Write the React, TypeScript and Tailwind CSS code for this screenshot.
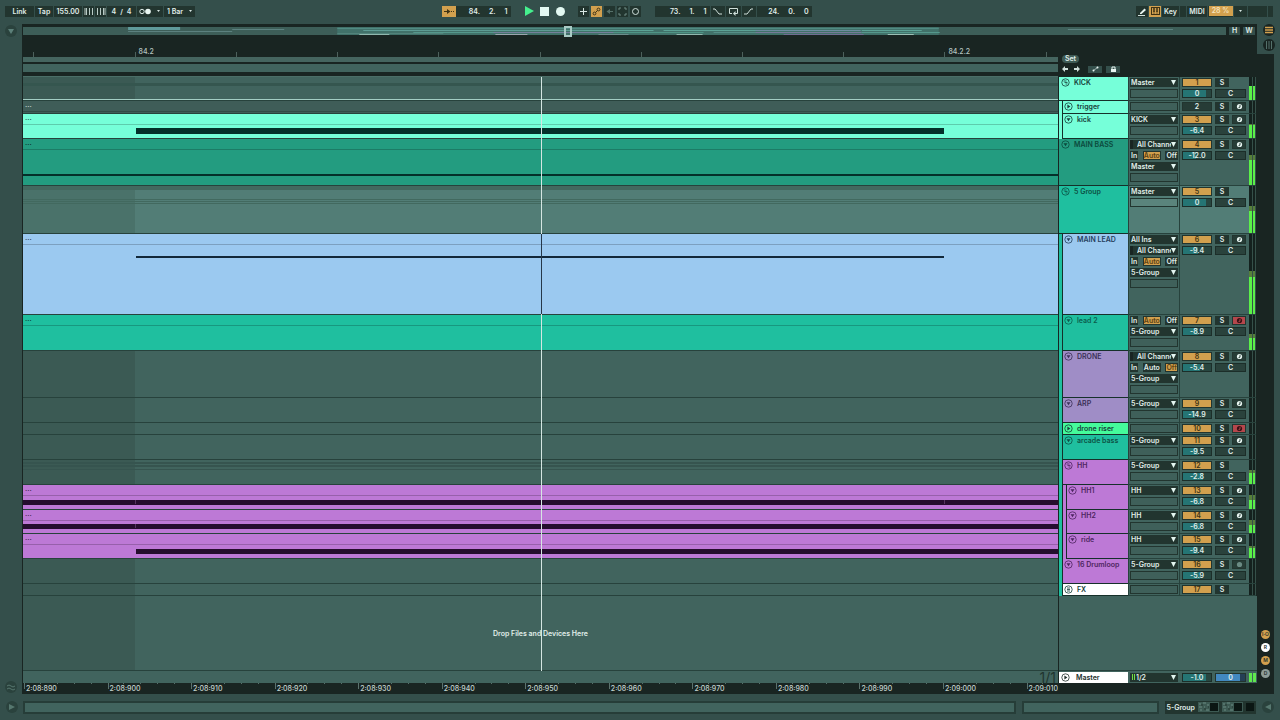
import { useState } from "react";
import type { ReactNode } from "react";

type Note = { className: string };

type Track = {
  id: number;
  name: string;
  level: 0 | 1 | 2;
  icon: "group" | "down" | "right" | "return";
  height: string;
  color: string;
  text?: string;
  lane?: string;
  clip?: boolean;
  notes?: Note[];
  input?: string;
  channel?: boolean;
  monitor?: "In" | "Auto" | "Off";
  output?: string;
  active?: boolean;
  volume?: string;
  fill?: number;
  arm?: "off" | "armed" | "dim";
  meter: [number, number];
};

const bar = "left-0 right-0";

const tracks: Track[] = [
  {
    id: 1, name: "KICK", level: 0, icon: "group", height: "h-[24px]", color: "bg-[#76ffd9]",
    notes: [{ className: `${bar} top-[6px] h-[3px] bg-[#35564f]` }, { className: `${bar} bottom-0 h-px bg-[#a3cec4]` }],
    output: "Master", volume: "0", fill: 82, meter: [60, 0],
  },
  {
    id: 2, name: "trigger", level: 1, icon: "right", height: "h-[13px]", color: "bg-[#76ffd9]", clip: true, lane: "bg-[#3f5d58]",
    active: false, arm: "off", meter: [0, 0],
  },
  {
    id: 3, name: "kick", level: 1, icon: "down", height: "h-[25px]", color: "bg-[#76ffd9]", clip: true, lane: "bg-[#76ffd9]",
    notes: [{ className: "left-[10.9%] w-[78.1%] top-[14px] h-[6px] bg-[#04302a]" }],
    output: "KICK", volume: "-6.4", fill: 62, arm: "off", meter: [55, 4],
  },
  {
    id: 4, name: "MAIN BASS", level: 0, icon: "down", height: "h-[47px]", color: "bg-[#239c80]", clip: true, lane: "bg-[#239c80]",
    text: "text-[#0b4a3d]",
    notes: [{ className: `${bar} top-[35px] h-[2px] bg-[#04302a]` }],
    channel: true, monitor: "Auto", output: "Master", volume: "-12.0", fill: 46, arm: "off", meter: [55, 10],
  },
  {
    id: 5, name: "5 Group", level: 0, icon: "group", height: "h-[48px]", color: "bg-[#1fbf9f]", lane: "bg-[#527d76]",
    text: "text-[#0c5144]",
    notes: [
      { className: `${bar} top-0 h-[4px] bg-[#43685f]` },
      { className: `${bar} top-[13px] h-px bg-[#42695f]` },
      { className: `${bar} top-[15px] h-px bg-[#42695f]` },
      { className: `${bar} top-[17px] h-px bg-[#42695f]` },
    ],
    output: "Master", volume: "0", fill: 82, meter: [46, 12],
  },
  {
    id: 6, name: "MAIN LEAD", level: 1, icon: "down", height: "h-[81px]", color: "bg-[#9bc9f0]", clip: true, lane: "bg-[#9bc9f0]",
    text: "text-[#25405c]",
    notes: [{ className: "left-[10.9%] w-[78.1%] top-[22px] h-[2px] bg-[#12283a]" }],
    input: "All Ins", channel: true, monitor: "Auto", output: "5-Group", volume: "-9.4", fill: 55, arm: "off", meter: [46, 8],
  },
  {
    id: 7, name: "lead 2", level: 1, icon: "down", height: "h-[36px]", color: "bg-[#1fbf9f]", clip: true, lane: "bg-[#1fbf9f]",
    text: "text-[#0c5e4e]",
    monitor: "Auto", output: "5-Group", volume: "-8.9", fill: 55, arm: "armed", meter: [34, 12],
  },
  {
    id: 8, name: "DRONE", level: 1, icon: "down", height: "h-[47px]", color: "bg-[#9f8dc6]", text: "text-[#3b3058]",
    channel: true, monitor: "Off", output: "5-Group", volume: "-5.4", fill: 62, arm: "off", meter: [0, 0],
  },
  {
    id: 9, name: "ARP", level: 1, icon: "down", height: "h-[25px]", color: "bg-[#9f8dc6]", text: "text-[#3b3058]",
    output: "5-Group", volume: "-14.9", fill: 42, arm: "off", meter: [0, 0],
  },
  {
    id: 10, name: "drone riser", level: 1, icon: "right", height: "h-[12px]", color: "bg-[#45fb9b]", arm: "armed", meter: [0, 0],
  },
  {
    id: 11, name: "arcade bass", level: 1, icon: "down", height: "h-[25px]", color: "bg-[#1fbf9f]", text: "text-[#0c5144]",
    output: "5-Group", volume: "-9.5", fill: 55, arm: "off", meter: [0, 0],
  },
  {
    id: 12, name: "HH", level: 1, icon: "group", height: "h-[25px]", color: "bg-[#bd79d6]", text: "text-[#4d2560]",
    notes: [
      { className: `${bar} top-[2px] h-[2px] bg-[#36544f]` },
      { className: `${bar} top-[5px] h-[2px] bg-[#36544f]` },
      { className: `${bar} top-[9px] h-px bg-[#36544f]` },
    ],
    output: "5-Group", volume: "-2.8", fill: 72, meter: [45, 15],
  },
  {
    id: 13, name: "HH1", level: 2, icon: "down", height: "h-[25px]", color: "bg-[#bd79d6]", clip: true, lane: "bg-[#bd79d6]",
    text: "text-[#4d2560]",
    notes: [
      { className: `${bar} top-[15px] h-[5px] bg-[#250d2e]` },
      { className: "left-[10.8%] w-px top-[15px] h-[4px] bg-[#55345f]" },
      { className: "left-[89%] w-px top-[15px] h-[4px] bg-[#55345f]" },
    ],
    output: "HH", volume: "-6.8", fill: 60, arm: "off", meter: [36, 22],
  },
  {
    id: 14, name: "HH2", level: 2, icon: "down", height: "h-[24px]", color: "bg-[#bd79d6]", clip: true, lane: "bg-[#bd79d6]",
    text: "text-[#4d2560]",
    notes: [
      { className: `${bar} top-[14px] h-[5px] bg-[#250d2e]` },
      { className: "left-[10.8%] w-px top-[14px] h-[4px] bg-[#55345f]" },
    ],
    output: "HH", volume: "-6.8", fill: 60, arm: "off", meter: [36, 22],
  },
  {
    id: 15, name: "ride", level: 2, icon: "down", height: "h-[25px]", color: "bg-[#bd79d6]", clip: true, lane: "bg-[#bd79d6]",
    text: "text-[#4d2560]",
    notes: [{ className: "left-[10.9%] right-0 top-[15px] h-[5px] bg-[#250d2e]" }],
    output: "HH", volume: "-9.4", fill: 52, arm: "off", meter: [40, 10],
  },
  {
    id: 16, name: "16 Drumloop", level: 1, icon: "down", height: "h-[25px]", color: "bg-[#bd79d6]", text: "text-[#4d2560]",
    output: "5-Group", volume: "-5.9", fill: 62, arm: "dim", meter: [0, 0],
  },
  { id: 17, name: "FX", level: 1, icon: "return", height: "h-[12px]", color: "bg-white", meter: [0, 0] },
];

const times = [
  "2:08:890", "2:08:900", "2:08:910", "2:08:920", "2:08:930", "2:08:940", "2:08:950",
  "2:08:960", "2:08:970", "2:08:980", "2:08:990", "2:09:000", "2:09:010",
];

const beats = ["", "84.2", "", "", "", "", "", "", "", "84.2.2", ""];

// x, y, width, colour
const overview: [number, number, number, string][] = [
  [105, 0, 52, "#5f9a9b"], [105, 1, 52, "#5f9a9b"], [105, 2, 52, "#5f9a9b"], [105, 4, 104, "#5c817f"], [209, 2, 52, "#5c817f"],
  [314, 1, 601, "#508a82"], [340, 3, 260, "#5d9c94"], [314, 6, 106, "#52837b"], [336, 7, 30, "#8fb8ae"],
  [390, 5, 90, "#55988c"], [470, 5, 150, "#74809b"], [472, 7, 32, "#9aa6ae"], [560, 3, 70, "#5ca396"],
  [590, 5, 90, "#4f9586"], [575, 7, 30, "#6b8d8c"], [640, 3, 110, "#5ca396"], [653, 7, 26, "#8fb8ae"],
  [690, 5, 60, "#568f88"], [732, 3, 105, "#6d8ca0"], [732, 5, 106, "#757b99"], [760, 7, 80, "#706e93"],
  [838, 3, 60, "#5ca396"], [864, 7, 26, "#9ac0b5"], [838, 5, 78, "#55988c"], [1044, 2, 105, "#5c817f"],
];

export default function App() {
  return (
    <div className="flex min-h-screen w-full flex-col overflow-hidden bg-[#344f4b] font-['Inter',sans-serif] text-[7px] leading-[9px] font-semibold text-[#e0eeea] select-none">
      <ControlBar />
      <div className="flex flex-1">
        <div className="flex w-[22px] shrink-0 flex-col items-center justify-between py-px">
          <RoundButton label="Show browser"><path d="M3 4h6L6 9z" fill="#5c8079" /></RoundButton>
          <RoundButton label="Groove pool"><path d="M2 5q2-2 4 0t4 0M2 8q2-2 4 0t4 0" fill="none" stroke="#56776f" /></RoundButton>
        </div>
        <main className="flex min-w-0 flex-1 bg-[#192522]">
          <div className="flex min-w-0 flex-1 flex-col pl-px">
            <Overview />
            <div className="flex flex-1">
              <Arrangement />
              <Headers />
            </div>
          </div>
          <ViewSwitches />
        </main>
        <div className="w-[6px] shrink-0" />
      </div>
      <StatusBar />
    </div>
  );
}

const box = "flex h-[11px] items-center justify-center bg-[#22352f]";
const orangeBox = "flex h-[11px] items-center justify-center bg-[#d2a04e] text-[#22302c]";

function ControlBar() {
  const [playing, setPlaying] = useState(true);
  return (
    <header className="flex h-[24px] items-center pr-[7px] pb-[2px] pl-[5px]">
      <div className="flex gap-px">
        <button className={`${box} w-[29px]`}>Link</button>
        <button className={`${box} w-[18px]`}>Tap</button>
        <input aria-label="Tempo" defaultValue="155.00" className={`${box} w-[28px] text-center`} />
        <button aria-label="Nudge down" className={`${box} w-[11px]`}>
          <svg width="10" height="7" viewBox="0 0 10 7"><path d="M1 0v7M2.500 0v7M5.500 0v7M8.500 0v7" stroke="#b9cbc6" /></svg>
        </button>
        <button aria-label="Nudge up" className={`${box} w-[11px]`}>
          <svg width="10" height="7" viewBox="0 0 10 7"><path d="M1.500 0v7M4.500 0v7M7.500 0v7M9 0v7" stroke="#b9cbc6" /></svg>
        </button>
        <div className={`${box} w-[29px] gap-[4px]`}><span>4</span><span>/</span><span>4</span></div>
        <button aria-label="Metronome" className={`${box} w-[26px] gap-[5px]`}>
          <svg width="12" height="7" viewBox="0 0 12 7"><circle cx="3" cy="3.500" r="2.200" fill="none" stroke="#d9e8e4" /><circle cx="9" cy="3.500" r="2.800" fill="#e9f6f2" /></svg>
          <Caret small />
        </button>
        <label className={`${box} relative w-[31px]`}>
          <select aria-label="Quantization" className="h-[11px] w-full appearance-none pl-[3px] outline-none">
            <option>1 Bar</option>
          </select>
          <span className="pointer-events-none absolute right-[2px]"><Caret small /></span>
        </label>
      </div>

      <div className="flex-[247]" />

      <div className="flex items-center">
        <button aria-label="Follow" className={`${orangeBox} w-[14px]`}>
          <svg width="12" height="7" viewBox="0 0 12 7"><path d="M1 3.500h3M8 3.500h1M10 3.500h1" stroke="#3f3315" /><path d="M4 1l3.500 2.500L4 6z" fill="#3f3315" /></svg>
        </button>
        <Position values={["84.", "2.", "1"]} />
        <button aria-label="Play" aria-pressed={playing} onClick={() => setPlaying(!playing)} className="ml-[13px]">
          <svg width="10" height="10" viewBox="0 0 10 10"><path d="M1 0l9 5-9 5z" fill={playing ? "#45f08e" : "#e3f5f0"} /></svg>
        </button>
        <button aria-label="Stop" onClick={() => setPlaying(false)} className="ml-[6px] size-[9px] bg-[#e3f9f2]" />
        <button aria-label="Record" className="ml-[7px] size-[9px] rounded-full bg-[#e3f9f2]" />
        <div className="ml-[13px] flex gap-[2px]">
          <button aria-label="Overdub" className={`${box} w-[11px]`}>
            <svg width="9" height="9" viewBox="0 0 9 9"><path d="M4.500 1v7M1 4.500h7" stroke="#d9e8e4" /></svg>
          </button>
          <button aria-label="Automation arm" className={`${orangeBox} w-[11px]`}>
            <svg width="9" height="9" viewBox="0 0 9 9" fill="none" stroke="#3f3315"><circle cx="2.500" cy="6.500" r="1.400" /><circle cx="6.500" cy="2.500" r="1.400" /><path d="M3.500 5.500l2-2" /></svg>
          </button>
          <button aria-label="Re-enable automation" className={`${box} w-[11px]`}>
            <svg width="9" height="9" viewBox="0 0 9 9"><path d="M8 4.500H4" stroke="#57726b" /><path d="M5 2L1.500 4.500 5 7z" fill="#57726b" /></svg>
          </button>
          <button aria-label="Capture MIDI" className={`${box} w-[11px]`}>
            <svg width="9" height="9" viewBox="0 0 9 9"><path d="M1 3V1h2M6 1h2v2M8 6v2H6M3 8H1V6" fill="none" stroke="#6f8b84" /></svg>
          </button>
          <button aria-label="Session record" className={`${box} w-[11px]`}>
            <svg width="9" height="9" viewBox="0 0 9 9"><circle cx="4.500" cy="4.500" r="3" fill="none" stroke="#cfdfda" /></svg>
          </button>
        </div>
        <div className="ml-[14px] flex gap-px">
          <Position values={["73.", "1.", "1"]} />
          <button aria-label="Punch in" className={`${box} w-[14px]`}>
            <svg width="11" height="7" viewBox="0 0 11 7"><path d="M1 1h2l4 5h3" fill="none" stroke="#cfdfda" /></svg>
          </button>
          <button aria-label="Loop" className={`${box} w-[15px]`}>
            <svg width="11" height="9" viewBox="0 0 11 9"><path d="M4 6.500H1.500v-5h8v5H7" fill="none" stroke="#cfdfda" /><path d="M7.500 4v5L5 6.500z" fill="#cfdfda" /></svg>
          </button>
          <button aria-label="Punch out" className={`${box} w-[14px]`}>
            <svg width="11" height="7" viewBox="0 0 11 7"><path d="M1 6h3l4-5h2" fill="none" stroke="#cfdfda" /></svg>
          </button>
          <Position values={["24.", "0.", "0"]} />
        </div>
      </div>

      <div className="flex-[325]" />

      <div className="flex gap-px">
        <button aria-label="Draw mode" className={`${box} w-[12px]`}>
          <svg width="9" height="9" viewBox="0 0 9 9"><path d="M2 6l4.500-4.500L8 3 3.500 7H2z" fill="#e9f6f2" /><path d="M0 8.500h7" stroke="#cfdfda" /></svg>
        </button>
        <button aria-label="Computer MIDI keyboard" className={`${orangeBox} w-[12px]`}>
          <svg width="9" height="8" viewBox="0 0 9 8"><rect x=".5" y=".5" width="8" height="7" fill="none" stroke="#3f3315" /><path d="M3 1v4M6 1v4" stroke="#3f3315" strokeWidth="1.500" /><path d="M3 4v4M6 4v4" stroke="#3f3315" strokeWidth=".6" /></svg>
        </button>
        <button className={`${box} w-[17px]`}>Key</button>
        <span className={`${box} w-[6px]`} />
        <button className={`${box} w-[20px]`}>MIDI</button>
        <span className={`${box} w-[25px]`}>
          <span className="h-[10px] w-[24px] bg-[#d2a04e] text-center text-[#f5e3bd]">28 %</span>
        </span>
        <button aria-label="CPU menu" className={`${box} w-[13px]`}><Caret small /></button>
        <span className={`${box} w-[19px]`} />
        <span className={`${box} w-[5px]`} />
      </div>
    </header>
  );
}

function Position({ values }: { values: string[] }) {
  return (
    <div className="flex h-[11px] w-[55px] items-center justify-end gap-[9px] bg-[#22352f] pr-[3px]">
      {values.map((v, i) => (
        <span key={i}>{v}</span>
      ))}
    </div>
  );
}

function Caret({ small }: { small?: boolean }) {
  return small ? (
    <svg width="5" height="4" viewBox="0 0 5 4"><path d="M1 1h3L2.500 3z" fill="#d9e8e4" /></svg>
  ) : (
    <svg width="5" height="5" viewBox="0 0 5 5"><path d="M0 0h5L2.500 5z" fill="#e3f5f0" /></svg>
  );
}

function RoundButton({ label, children }: { label: string; children: ReactNode }) {
  return (
    <button aria-label={label} className="size-[12px] rounded-full bg-[#2a423d]">
      <svg width="12" height="12" viewBox="0 0 12 12">{children}</svg>
    </button>
  );
}

function Overview() {
  return (
    <div className="flex gap-[3px] pt-[3px] pr-[2px] pb-px">
      <div className="relative h-[8px] flex-1 bg-[#3d5e58]">
        <svg className="h-full w-full" viewBox="0 0 1202 8" preserveAspectRatio="none">
          <rect x="314" width="601" height="8" fill="#41726a" />
          {overview.map(([x, y, w, c], i) => (
            <rect key={i} x={x} y={y} width={w} height="1" fill={c} />
          ))}
        </svg>
        <span className="absolute -top-px left-[45%] h-[11px] w-[8px] border-2 border-[#a9cbc5]" />
      </div>
      <button className="h-[8px] w-[11px] bg-[#344f4b] leading-[8px]">H</button>
      <button className="h-[8px] w-[12px] bg-[#344f4b] leading-[8px]">W</button>
    </div>
  );
}

function Arrangement() {
  return (
    <section aria-label="Arrangement" className="flex min-w-0 flex-1 flex-col">
      <div className="flex h-[21px] items-end overflow-hidden pl-[1%]">
        {beats.map((b, i) => (
          <div key={i} className="flex h-[10px] w-[9.88%] shrink-0 items-end gap-[3px]">
            <span className="h-[5px] w-px bg-[#4d615c]" />
            <span className="self-start font-medium text-[#b5c4c0]">{b}</span>
          </div>
        ))}
      </div>
      <div className="h-[5px] bg-[#45655f]" />
      <div className="mt-[2px] h-[8px] border-b border-[#41645e] bg-[#41645e]" />
      <div className="mt-[4px] h-px bg-[#4b6e67]" />

      <div className="relative flex flex-1 flex-col bg-[#41645e]">
        {/* area before the loop start */}
        <div className="absolute inset-y-0 left-0 w-[10.8%] bg-[#3b5a54]" />
        {tracks.map((t) => (
          <Lane key={t.id} track={t} />
        ))}
        <div className="relative flex flex-1 items-center justify-center border-b border-[#27423c]">
          <p>Drop Files and Devices Here</p>
        </div>
        <div className="pointer-events-none absolute inset-y-0 left-1/2 w-px bg-[#d5e6e2]" />
        <div className="pointer-events-none absolute top-[157px] left-1/2 h-[80px] w-px bg-[#25384a]" />
      </div>

      <div className="relative flex h-[12px] items-center justify-end bg-[#41645e] pr-[2px] text-[14px] font-normal text-[#20352f]">
        1/1
      </div>
      <div className="flex h-[11px] overflow-hidden pl-px">
        {times.map((t) => (
          <div key={t} className="relative flex w-[8.08%] shrink-0">
            <span className="h-[6px] w-px bg-[#5c726d]" />
            <span className="pt-px pl-px font-medium text-[#c4d3cf]">{t}</span>
            <div className="absolute inset-x-0 top-0 flex h-px justify-evenly">
              {[0, 1, 2, 3].map((n) => (
                <span key={n} className="w-px bg-[#56706a]" />
              ))}
            </div>
          </div>
        ))}
      </div>
    </section>
  );
}

function Lane({ track }: { track: Track }) {
  return (
    <div className={`relative shrink-0 border-b border-[#27423c] ${track.height} ${track.lane ?? ""}`}>
      {track.clip && (
        <div className="h-[11px] border-b border-black/20 pl-[2px] leading-[8px] text-black/70">
          <span className={track.active === false ? "text-[#c5d6d2]" : ""}>...</span>
        </div>
      )}
      {track.id === 5 && <div className="absolute inset-y-0 left-0 w-[10.8%] bg-[#4a726a]" />}
      {track.notes?.map((n, i) => (
        <div key={i} className={`absolute ${n.className}`} />
      ))}
    </div>
  );
}

function Headers() {
  return (
    <section aria-label="Track headers" className="flex w-[199px] shrink-0 flex-col pl-px">
      <div className="flex h-[41px] flex-col justify-end gap-[2px] pb-[4px] pl-[3px]">
        <button className="h-[8px] w-[17px] rounded-full bg-[#3f5b55] leading-[8px]">Set</button>
        <div className="flex h-[8px] items-center gap-[4px]">
          <button aria-label="Previous locator">
            <svg width="7" height="6" viewBox="0 0 7 6"><path d="M0 3l3-3v6zM3 2h3v2H3z" fill="#cfdfda" /></svg>
          </button>
          <button aria-label="Next locator">
            <svg width="7" height="6" viewBox="0 0 7 6"><path d="M7 3L4 0v6zM1 2h3v2H1z" fill="#cfdfda" /></svg>
          </button>
          <button aria-label="Automation mode" className="ml-[4px] flex h-[7px] w-[14px] items-center justify-center bg-[#344f4b]">
            <svg width="7" height="6" viewBox="0 0 7 6"><path d="M1 5l5-4" stroke="#d9e8e4" strokeWidth=".7" /><circle cx="1.500" cy="4.500" r="1" fill="#e9f6f2" /><circle cx="5.500" cy="1.500" r="1" fill="#e9f6f2" /></svg>
          </button>
          <button aria-label="Lock envelopes" className="flex h-[7px] w-[14px] items-center justify-center bg-[#344f4b]">
            <svg width="7" height="6" viewBox="0 0 7 6"><path d="M1 3h5v3H1z" fill="#e9f6f2" /><path d="M2 3V1h3v2" fill="none" stroke="#e9f6f2" /></svg>
          </button>
        </div>
      </div>
      {tracks.map((t) => (
        <Header key={t.id} track={t} />
      ))}
      <div className="flex-1 border-b border-[#27423c] bg-[#41645e]" />
      <div className="flex h-[12px] items-center bg-[#41645e]">
        <div className="flex h-[11px] w-[69px] items-center gap-[6px] bg-white pl-[2px] text-[#22302c]">
          <TrackIcon kind="right" />
          Master
        </div>
        <div className="flex w-[52px] items-center pl-[2px]">
          <div className="flex h-[9px] w-[48px] items-center bg-[#22352f] pl-[2px]">
            <span className="mr-px h-[6px] w-px bg-[#6fe043]" />
            <span className="h-[6px] w-px bg-[#6fe043]" />
            <div className="flex-1"><Chooser label="Master output" value="1/2" /></div>
          </div>
        </div>
        <div className="flex flex-1 gap-[3px] pl-[2px]">
          <Value label="Master volume" value="-1.0" fill={82} />
          <label className="relative flex h-[9px] w-[31px] border border-[#22352f] bg-[#243f55]">
            <span className="absolute inset-y-0 left-0 w-[82%] bg-[#4288c0]" />
            <input aria-label="Cue volume" defaultValue="0" className="relative w-full text-center leading-[7px]" />
          </label>
        </div>
        <div className="mr-px flex h-[11px] w-[7px] gap-px pt-px">
          <span className="h-[9px] w-[3px] bg-[#5fe84e]" />
          <span className="h-[9px] w-[3px] bg-[#5fe84e]" />
        </div>
      </div>
      <div className="h-[11px]" />
    </section>
  );
}

function Header({ track }: { track: Track }) {
  const { level, name } = track;
  const strip = track.id < 4 ? "bg-[#76ffd9]" : "bg-[#1fbf9f]";
  const selected = track.id === 5;
  return (
    <div className={`flex shrink-0 ${track.height}`}>
      <div className="flex w-[69px]">
        {level > 0 && <span className={`w-[3px] ${strip}`} />}
        {level === 2 && <span className="ml-px w-[3px] bg-[#bd79d6]" />}
        <div
          className={`flex flex-1 items-start gap-[4px] overflow-hidden border-b border-[#16302a] pt-px whitespace-nowrap ${
            level > 0 ? "border-l pl-px" : "pl-[2px]"
          } ${track.color} ${track.text ?? "text-[#17403a]"}`}
        >
          <TrackIcon kind={track.icon} />
          {name}
        </div>
      </div>
      <div
        className={`flex w-[52px] flex-col gap-[2px] border-x border-b border-[#27423c] px-px pt-px ${
          selected ? "bg-[#527d76]" : "bg-[#41645e]"
        }`}
      >
        {track.input && <Chooser label={`${name} input`} value={track.input} />}
        {track.channel && <Chooser label={`${name} input channel`} value="All Channels" indent />}
        {track.monitor && (
          <div className="flex h-[9px] justify-between">
            {["In", "Auto", "Off"].map((m) => (
              <button
                key={m}
                aria-pressed={m === track.monitor}
                className={`h-[9px] px-px ${
                  m === track.monitor ? "bg-[#d2a04e] text-[#5b4212] outline-1 -outline-offset-1 outline-[#22352f]" : "bg-[#22352f]"
                }`}
              >
                {m}
              </button>
            ))}
          </div>
        )}
        {track.output && <Chooser label={`${name} output`} value={track.output} />}
        <span className={`h-[9px] border border-[#22352f] ${selected ? "bg-[#5a847c]" : "bg-[#3f605a]"}`} />
      </div>
      <div
        className={`flex flex-1 flex-col gap-[2px] border-b border-[#27423c] pt-px pl-[2px] ${
          selected ? "bg-[#527d76]" : "bg-[#41645e]"
        }`}
      >
        <div className="flex gap-[3px]">
          <button
            aria-label={`${name} activator`}
            className={`h-[9px] w-[30px] outline-1 -outline-offset-1 outline-[#22352f] ${
              track.active === false ? "bg-[#263c36]" : "bg-[#d2a04e] text-[#3f3315]"
            }`}
          >
            {track.id}
          </button>
          <button aria-label={`Solo ${name}`} className="h-[9px] w-[14px] bg-[#22352f]">S</button>
          {track.arm && (
            <button
              aria-label={`Arm ${name}`}
              className={`flex h-[9px] w-[14px] items-center justify-center border border-[#22352f] ${
                track.arm === "armed" ? "bg-[#b5474c]" : "bg-[#263c36]"
              }`}
            >
              <ArmIcon state={track.arm} />
            </button>
          )}
        </div>
        {track.volume && (
          <div className="flex gap-[3px]">
            <Value label={`${name} volume`} value={track.volume} fill={track.fill ?? 0} />
            <input
              aria-label={`${name} pan`}
              defaultValue="C"
              className="h-[9px] w-[31px] border border-[#1c2e29] bg-[#2a423c] text-center leading-[7px]"
            />
          </div>
        )}
      </div>
      <Meter level={track.meter[0]} peak={track.meter[1]} />
    </div>
  );
}

function Chooser({ label, value, indent }: { label: string; value: string; indent?: boolean }) {
  return (
    <label className={`relative flex h-[9px] items-center bg-[#22352f] ${indent ? "border-l-[3px] border-[#192522]" : ""}`}>
      <select
        aria-label={label}
        className={`mr-[7px] h-[9px] w-full appearance-none overflow-hidden leading-[9px] text-clip outline-none ${indent ? "pl-[4px]" : "pl-px"}`}
      >
        <option>{value}</option>
      </select>
      <span className="pointer-events-none absolute right-[2px]"><Caret /></span>
    </label>
  );
}

function Value({ label, value, fill }: { label: string; value: string; fill: number }) {
  return (
    <label className="relative flex h-[9px] w-[30px] border border-[#1c2e29] bg-[#284640]">
      <span className="absolute inset-y-0 left-0 bg-[#257574]" style={{ width: `${fill}%` }} />
      <input aria-label={label} defaultValue={value} className="relative w-full text-center leading-[7px]" />
    </label>
  );
}

function Meter({ level, peak }: { level: number; peak: number }) {
  return (
    <div className="mr-px flex w-[7px] gap-px border-b border-[#27423c] bg-[#355049] pr-px">
      {[0, 1].map((n) => (
        <span key={n} className="flex flex-1 flex-col justify-end bg-[#14211e]">
          <span className="bg-[#56803a]" style={{ height: `${peak}%` }} />
          <span className="bg-[#5af049]" style={{ height: `${level}%` }} />
        </span>
      ))}
    </div>
  );
}

function TrackIcon({ kind }: { kind: Track["icon"] }) {
  return (
    <svg className="shrink-0" width="9" height="9" viewBox="0 0 9 9">
      <circle cx="4.500" cy="4.500" r="3.700" fill="none" stroke="currentColor" strokeWidth=".8" />
      {kind === "down" && <path d="M2.500 3.200h4L4.500 6.300z" fill="currentColor" />}
      {kind === "right" && <path d="M3.400 2.500v4l3-2z" fill="currentColor" />}
      {kind === "group" && <path d="M2.500 3h3M3.500 4.500h3M4.500 6h2" stroke="currentColor" strokeWidth=".8" />}
      {kind === "return" && <path d="M3 3h3M3 4.500h3M3 6h3" stroke="currentColor" strokeWidth=".8" />}
    </svg>
  );
}

function ArmIcon({ state }: { state: "off" | "armed" | "dim" }) {
  const fg = state === "off" ? "#e9f6f2" : state === "armed" ? "#3a1015" : "#6b8b84";
  return (
    <svg width="7" height="7" viewBox="0 0 7 7">
      <circle cx="3.500" cy="3.500" r="2.600" fill={fg} />
      {state !== "dim" && <path d="M4 1.800v2.400H3v1" fill="none" stroke={state === "armed" ? "#b5474c" : "#263c36"} strokeWidth=".9" />}
    </svg>
  );
}

const sections = [
  { id: "I·O", label: "Show I/O", className: "bg-[#d2a04e]" },
  { id: "R", label: "Show returns", className: "bg-white" },
  { id: "M", label: "Show mixer", className: "bg-[#d2a04e]" },
  { id: "D", label: "Show delays", className: "bg-[#8d9c98]" },
];

function ViewSwitches() {
  return (
    <div className="flex w-[17px] flex-col justify-between">
      <div className="-mr-[6px] flex flex-col items-center gap-[3px] bg-[#344f4b] pb-[3px]">
        <button aria-label="Arrangement view" className="size-[12px] rounded-full bg-[#192522]">
          <svg width="12" height="12" viewBox="0 0 12 12"><path d="M2 3.500h8M2 6h8M2 8.500h8" stroke="#d2a04e" strokeWidth="1.500" /></svg>
        </button>
        <button aria-label="Session view" className="size-[12px] rounded-full bg-[#192522]">
          <svg width="12" height="12" viewBox="0 0 12 12"><path d="M3.500 2v8M6 2v8M8.500 2v8" stroke="#54716b" /></svg>
        </button>
      </div>
      <div className="flex flex-col items-center gap-[4px] pb-[16px]">
        {sections.map((s) => (
          <button
            key={s.id}
            aria-label={s.label}
            className={`flex size-[9px] items-center justify-center rounded-full text-[5px] text-[#22302c] ${s.className}`}
          >
            {s.id}
          </button>
        ))}
      </div>
    </div>
  );
}

const panel = "h-[13px] border-2 border-[#263d38] bg-[#41645e]";

function StatusBar() {
  return (
    <footer className="flex h-[26px] items-center pr-[6px] pl-[6px]">
      <RoundButton label="Show help"><path d="M3 3v6l6-3z" fill="#56776f" /></RoundButton>
      <div className={`${panel} ml-[5px] flex-1`} />
      <div className={`${panel} ml-[6px] w-[137px]`} />
      <div className="ml-[6px] flex h-[13px] items-center gap-[3px] bg-[#22352f] pr-[2px] pl-[2px]">
        <span>5-Group</span>
        <DeviceIcon />
        <DeviceIcon />
        <span className="size-[8px] bg-[#0b1613]" />
      </div>
      <div className="ml-[6px] flex">
        <RoundButton label="Show detail view"><path d="M9 3v6L3 6z" fill="#56776f" /></RoundButton>
      </div>
    </footer>
  );
}

function DeviceIcon() {
  return (
    <svg width="21" height="10" viewBox="0 0 21 10">
      <path d="M0 0h21v10H0z" fill="#3d5a53" />
      <path d="M1 2h2M5 1h3M9 3h2M1 5h3M6 5h1M8 8h3M2 8h2" stroke="#6a8a82" />
      <path d="M3 3h2M6 7h2M10 5h1" stroke="#22352f" />
      <rect x="12" y="1" width="8" height="8" fill="#0b1613" />
    </svg>
  );
}
